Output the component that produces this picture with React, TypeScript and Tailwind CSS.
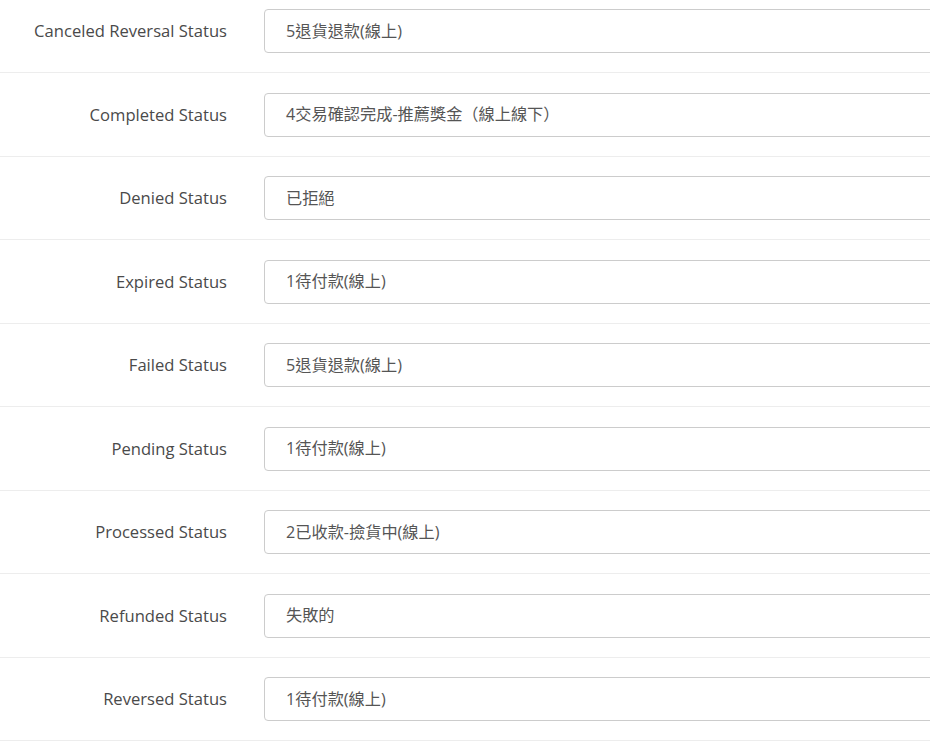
import React from "react";

const rows: [string, string][] = [
  ["Canceled Reversal Status", "5退貨退款(線上)"],
  ["Completed Status", "4交易確認完成-推薦獎金（線上線下）"],
  ["Denied Status", "已拒絕"],
  ["Expired Status", "1待付款(線上)"],
  ["Failed Status", "5退貨退款(線上)"],
  ["Pending Status", "1待付款(線上)"],
  ["Processed Status", "2已收款-撿貨中(線上)"],
  ["Refunded Status", "失敗的"],
  ["Reversed Status", "1待付款(線上)"],
];

export default function App() {
  return (
    <div
      className="w-full min-h-[751px] overflow-hidden bg-white"
      style={{ fontFamily: '"Open Sans", "Noto Sans CJK TC", sans-serif' }}
    >
      {rows.map(([label, value], i) => (
        <div
          key={label}
          className={`flex items-center border-b border-[#ededed] pb-[19px] ${
            i === 0 ? "pt-[9px]" : "pt-[19.5px]"
          }`}
        >
          <div className="w-[227px] shrink-0 pt-[1px] text-right text-[16.6px] text-[#4a4a4a]">
            {label}
          </div>
          <div className="ml-[37px] flex h-[44px] w-[720px] shrink-0 items-center rounded-[4px] border border-[#cccccc] bg-white pl-[21px] text-[16.2px] text-[#555555] [text-spacing-trim:space-all]">
            {value}
          </div>
        </div>
      ))}
    </div>
  );
}
